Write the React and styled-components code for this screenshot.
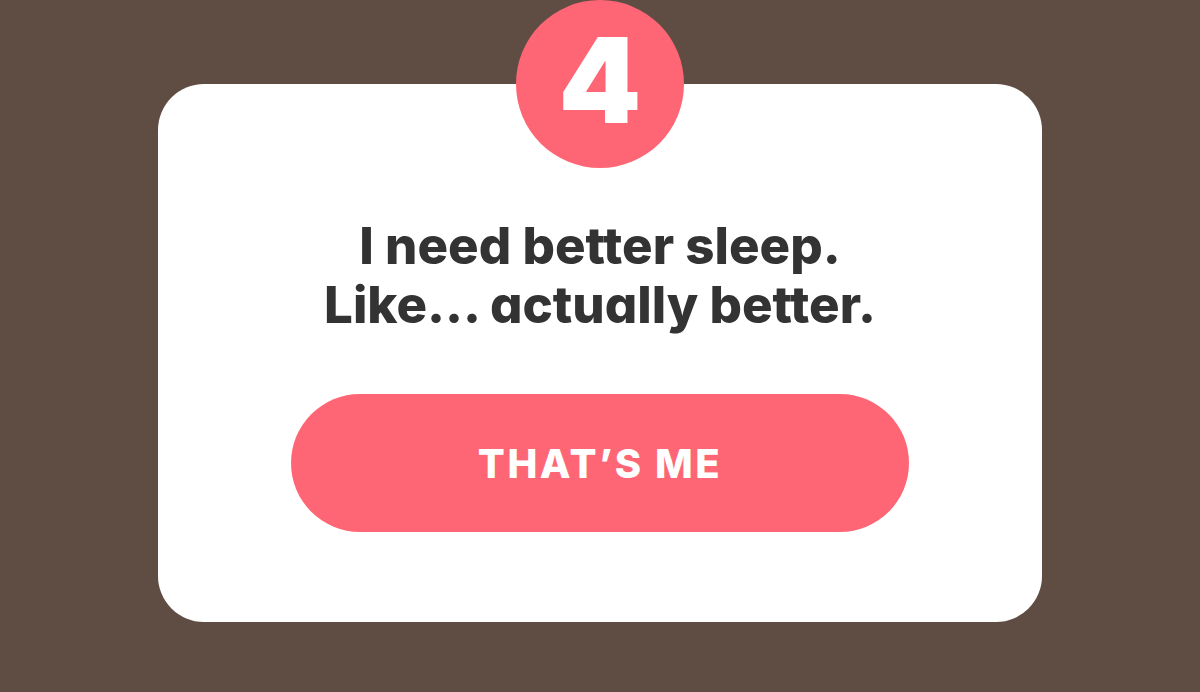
import React from 'react'
import styled, { createGlobalStyle } from 'styled-components'

const GlobalStyle = createGlobalStyle`
    html, body {
        margin: 0;
        padding: 0;
        background: #5f4d43;
    }
`

const Page = styled.div`
    width: 1200px;
    height: 692px;
    box-sizing: border-box;
    padding-top: 84px;
    display: flex;
    justify-content: center;
    font-family: Inter, "Open Sans", sans-serif;
    font-feature-settings: 'cv11' 1;
`

const Card = styled.div`
    width: 884px;
    height: 538px;
    box-sizing: border-box;
    background: #ffffff;
    border-radius: 46px;
    position: relative;
    display: flex;
    flex-direction: column;
    align-items: center;
    padding-top: 132px;
`

const Badge = styled.div`
    position: absolute;
    top: -84px;
    left: 50%;
    transform: translateX(-50%);
    width: 168px;
    height: 168px;
    box-sizing: border-box;
    padding-bottom: 8px;
    border-radius: 50%;
    background: #ff6675;
    color: #ffffff;
    display: flex;
    align-items: center;
    justify-content: center;
    font-size: 118px;
    font-weight: 900;
    line-height: 1;
`

const Heading = styled.h1`
    margin: 0;
    color: #333333;
    font-size: 51px;
    font-weight: 800;
    line-height: 59px;
    text-align: center;
    letter-spacing: 0;
`

const Button = styled.button`
    margin-top: 60px;
    width: 618px;
    height: 138px;
    border: none;
    border-radius: 69px;
    background: #ff6675;
    color: #ffffff;
    font-family: inherit;
    font-size: 40px;
    font-weight: 800;
    letter-spacing: 2.5px;
    cursor: pointer;
`

function App() {
    return (
        <>
            <GlobalStyle />
            <Page>
                <Card>
                    <Badge>4</Badge>
                    <Heading>
                        I need better sleep.
                        <br />
                        Like... actually better.
                    </Heading>
                    <Button>THAT’S ME</Button>
                </Card>
            </Page>
        </>
    )
}

export default App
